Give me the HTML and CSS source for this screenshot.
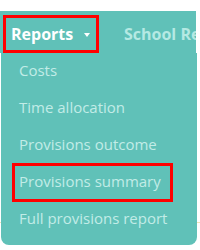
FILE: index.html
```html
<!DOCTYPE html>
<html lang="en">
<head>
    <meta charset="UTF-8">
    <meta name="viewport" content="width=device-width, initial-scale=1.0">
    <link rel="stylesheet" href="styles.css">
    <title>Reports menu</title>
</head>
<body>
    <div id="topbar"></div>

    <div id="nav">
        <div class="nav-item marked">
            Reports <span class="caret"></span>
        </div>
        <div class="nav-item dim">School Reports</div>
    </div>

    <div id="dropdown">
        <div class="menu-item">Costs</div>
        <div class="menu-item">Time allocation</div>
        <div class="menu-item">Provisions outcome</div>
        <div class="menu-item marked">Provisions summary</div>
        <div class="menu-item">Full provisions report</div>
    </div>
</body>
</html>
```

FILE: styles.css
```css
body {
    margin: 0;
    width: 200px;
    height: 250px;
    overflow: hidden;
    background: #ffffff linear-gradient(#f3e4b8, #f3e4b8) 0 222px / 100% 1px no-repeat;
    font-family: "Open Sans", sans-serif;
}

#topbar {
    height: 11px;
}

#nav {
    display: flex;
    align-items: flex-end;
    height: 42px;
    margin-right: 4px;
    background-color: #60c1b8;
    overflow: hidden;
    white-space: nowrap;
}

.nav-item {
    display: flex;
    align-items: center;
    flex-shrink: 0;
    font-size: 16px;
    font-weight: bold;
    color: #ffffff;
    height: 38px;
    padding-bottom: 1px;
    box-sizing: border-box;
}

.nav-item.marked {
    margin-left: 3px;
    padding-left: 5px;
    border: 3px solid #ff0000;
    width: 96px;
}

.nav-item.dim {
    color: #b5e9e3;
    padding-left: 25px;
}

.caret {
    display: inline-block;
    width: 0;
    height: 0;
    margin-left: 11px;
    margin-top: 2px;
    border-left: 3px solid transparent;
    border-right: 3px solid transparent;
    border-top: 4px solid #ffffff;
}

#dropdown {
    margin: 0 3px 0 1px;
    padding: 0 0 7px 0;
    background-color: #60c1b8;
    border-radius: 0 0 8px 8px;
}

.menu-item {
    display: flex;
    align-items: center;
    height: 37px;
    padding: 0 0 4px 18px;
    box-sizing: border-box;
    font-size: 15px;
    color: #c2ece7;
}

.menu-item.marked {
    height: 39px;
    margin: -1px 24px -1px 11px;
    padding-left: 4px;
    border: 3px solid #ff0000;
}
```
